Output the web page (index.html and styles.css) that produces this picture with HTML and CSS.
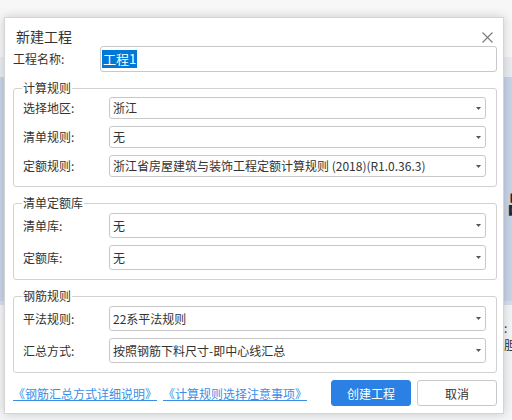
FILE: index.html
```html
<!DOCTYPE html>
<html lang="zh-CN">
<head>
<meta charset="utf-8">
<title>新建工程</title>
<link rel="stylesheet" href="styles.css">
</head>
<body>
<div class="backdrop">
  <div class="bd-top"></div>
  <div class="bd-bar"></div>
  <div class="bd-blue"><span class="bd-glyph">吕</span></div>
  <div class="bd-stripe"></div>
  <div class="bd-rest"><span class="bd-small">:胆</span></div>
</div>

<div class="dialog">
  <div class="titlebar">
    <span class="title">新建工程</span>
    <svg class="close" width="11" height="11" viewBox="0 0 11 11"><path d="M0.5 0.5 L10.5 10.5 M10.5 0.5 L0.5 10.5" stroke="#7a7a7a" stroke-width="1.1" fill="none"/></svg>
  </div>

  <div class="name-row">
    <span class="label name-label">工程名称:</span>
    <div class="input"><span class="sel-text">工程1</span></div>
  </div>

  <div class="group g1">
    <span class="legend">计算规则</span>
    <div class="row"><span class="label">选择地区:</span><div class="select"><span>浙江</span><svg class="arrow" width="5" height="3" viewBox="0 0 5 3"><polygon points="0,0 5,0 2.5,3" fill="#555"/></svg></div></div>
    <div class="row"><span class="label">清单规则:</span><div class="select"><span>无</span><svg class="arrow" width="5" height="3" viewBox="0 0 5 3"><polygon points="0,0 5,0 2.5,3" fill="#555"/></svg></div></div>
    <div class="row"><span class="label">定额规则:</span><div class="select"><span>浙江省房屋建筑与装饰工程定额计算规则 (2018)(R1.0.36.3)</span><svg class="arrow" width="5" height="3" viewBox="0 0 5 3"><polygon points="0,0 5,0 2.5,3" fill="#555"/></svg></div></div>
  </div>

  <div class="group g2">
    <span class="legend">清单定额库</span>
    <div class="row"><span class="label">清单库:</span><div class="select"><span>无</span><svg class="arrow" width="5" height="3" viewBox="0 0 5 3"><polygon points="0,0 5,0 2.5,3" fill="#555"/></svg></div></div>
    <div class="row"><span class="label">定额库:</span><div class="select"><span>无</span><svg class="arrow" width="5" height="3" viewBox="0 0 5 3"><polygon points="0,0 5,0 2.5,3" fill="#555"/></svg></div></div>
  </div>

  <div class="group g3">
    <span class="legend">钢筋规则</span>
    <div class="row"><span class="label">平法规则:</span><div class="select"><span>22系平法规则</span><svg class="arrow" width="5" height="3" viewBox="0 0 5 3"><polygon points="0,0 5,0 2.5,3" fill="#555"/></svg></div></div>
    <div class="row"><span class="label">汇总方式:</span><div class="select"><span>按照钢筋下料尺寸-即中心线汇总</span><svg class="arrow" width="5" height="3" viewBox="0 0 5 3"><polygon points="0,0 5,0 2.5,3" fill="#555"/></svg></div></div>
  </div>

  <div class="footer">
    <a class="link" href="#">《钢筋汇总方式详细说明》</a>
    <a class="link" href="#">《计算规则选择注意事项》</a>
    <span class="spacer"></span>
    <button class="btn primary">创建工程</button>
    <button class="btn">取消</button>
  </div>
</div>
</body>
</html>
```

FILE: styles.css
```css
* { box-sizing: border-box; }
html, body { margin: 0; padding: 0; }
body {
  width: 512px;
  height: 420px;
  overflow: hidden;
  position: relative;
  background: #f6f6f6;
  font-family: "Noto Sans CJK SC", "Noto Sans", "Liberation Sans", sans-serif;
  font-size: 12px;
  color: #333;
}

.backdrop { display: flex; flex-direction: column; height: 420px; }
.bd-top { height: 57px; background: #f7f7f7; }
.bd-bar { height: 20px; background: #eaedf1; }
.bd-blue { height: 224px; background: #c8d5e9; padding: 112px 0 0 506px; }
.bd-glyph { font-size: 24px; line-height: 28px; color: #1e2a44; font-weight: bold; }
.bd-stripe { height: 4px; background: #d8e0ec; }
.bd-rest { flex: 1; background: #f4f5f7; padding: 14px 0 0 504px; }
.bd-small { font-size: 12px; color: #333; }

.dialog {
  position: absolute;
  left: 4px;
  top: 17px;
  width: 500px;
  height: 397px;
  background: #fff;
  border: 1px solid #d4d4d4;
  box-shadow: 0 0 10px rgba(0, 0, 0, 0.18);
  padding: 0 6px 7px 8px;
  display: flex;
  flex-direction: column;
}

.titlebar {
  height: 28px;
  display: flex;
  align-items: flex-start;
  justify-content: space-between;
  padding: 9px 4px 0 3px;
}
.title { font-size: 14px; line-height: 18px; color: #333; }
.close { margin-top: 5px; }

.name-row { display: flex; align-items: center; height: 26px; margin-bottom: 16px; }
.label { flex: none; line-height: 16px; color: #333; }
.name-label { width: 87px; }
.input {
  flex: 1;
  height: 26px;
  border: 1px solid #c8c8c8;
  border-radius: 3px;
  display: flex;
  align-items: center;
  padding-left: 1px;
}
.sel-text {
  background: #0078d7;
  color: #fff;
  font-size: 13px;
  line-height: 18px;
  padding: 0 1px;
}

.group {
  position: relative;
  border: 1px solid #d2d2d2;
  border-radius: 3px;
  padding: 9px 10px 9px 9px;
  display: flex;
  flex-direction: column;
  gap: 7px;
  margin-bottom: 16px;
}
.group.g1 { padding-top: 8px; }
.group.g3 { margin-bottom: 7px; }
.legend {
  position: absolute;
  top: -9px;
  left: 8px;
  background: #fff;
  padding: 0 1px;
  line-height: 16px;
  color: #333;
}
.row { display: flex; align-items: center; }
.row .label { width: 86px; }
.select {
  flex: 1;
  height: 25px;
  border: 1px solid #c8c8c8;
  border-radius: 3px;
  display: flex;
  align-items: center;
  justify-content: space-between;
  padding: 0 4px 0 3px;
  line-height: 16px;
  white-space: nowrap;
}
.g1 .select { height: 22px; }
.arrow { flex: none; }

.footer { display: flex; align-items: center; height: 26px; }
.link {
  color: #3b8ee6;
  text-decoration: underline;
  line-height: 16px;
  margin-right: 6px;
  padding-top: 2px;
}
.spacer { flex: 1; }
.btn {
  width: 80px;
  height: 26px;
  border: 1px solid #c8c8c8;
  border-radius: 3px;
  background: #fff;
  color: #333;
  font-family: inherit;
  font-size: 12px;
  padding: 0;
  margin-left: 6px;
}
.btn.primary {
  background: #2b80e3;
  border-color: #2b80e3;
  color: #fff;
}
```
